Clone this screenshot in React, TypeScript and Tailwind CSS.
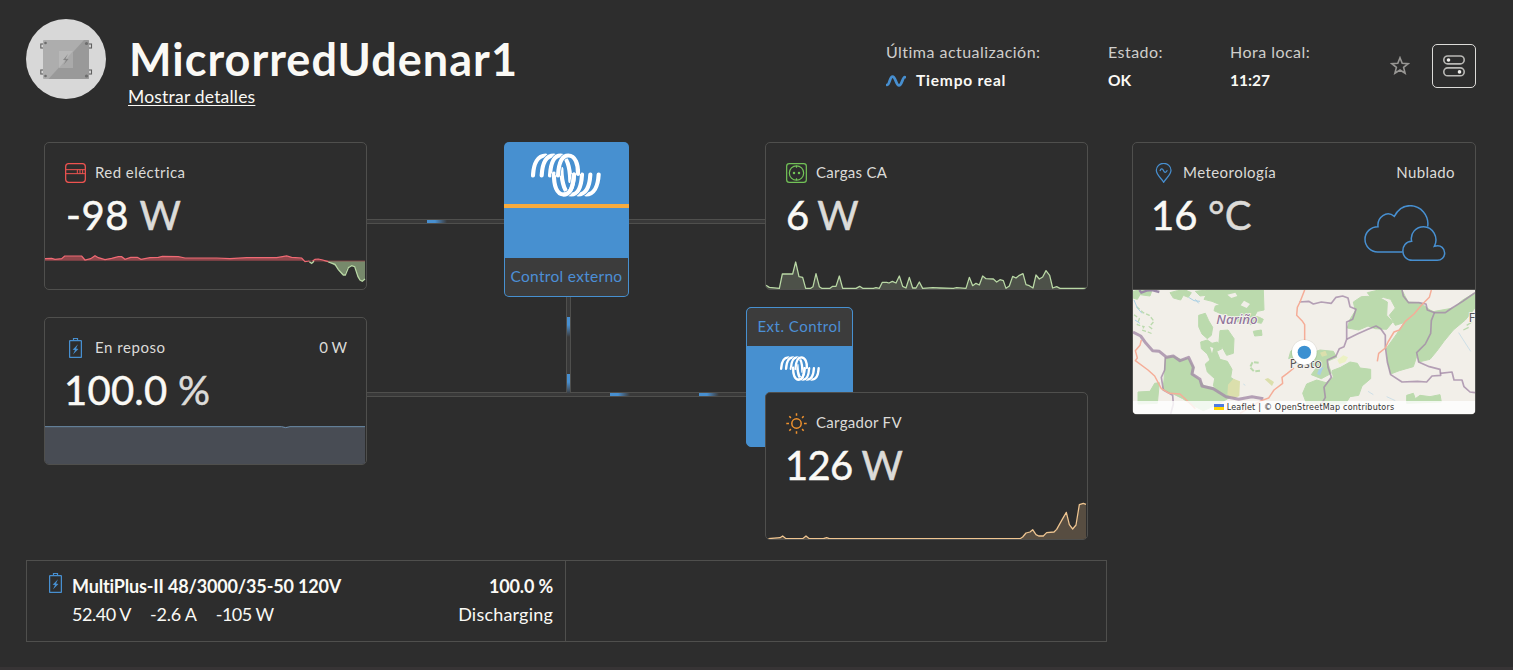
import type { ReactNode } from 'react';

const GREENS = [
  'M39 34 L58 30 L95 34 L90 48 L60 44 L52 58 L39 54Z',
  'M150 38 L172 32 L196 30 L214 38 L205 52 L190 46 L182 60 L160 54Z',
  'M226 34 L260 30 L430 30 L432 90 L412 94 L404 108 L418 112 L430 118 L424 130 L404 126 L392 134 L376 120 L352 126 L346 112 L318 104 L300 100 L282 92 L286 78 L300 74 L276 64 L252 58 L258 46 L240 48Z',
  'M236 106 L256 100 L266 122 L278 142 L274 166 L262 176 L246 162 L236 140Z',
  'M300 152 L324 150 L342 176 L340 220 L320 226 L308 204 L296 196Z',
  'M242 186 L262 180 L276 190 L292 186 L306 206 L290 214 L300 238 L322 244 L336 268 L332 292 L352 306 L350 340 L330 352 L302 334 L280 318 L284 296 L262 276 L256 252 L270 240 L262 222 L244 206Z',
  'M400 154 L424 150 L426 166 L404 168Z',
  'M136 232 L160 228 L186 240 L204 234 L222 262 L218 282 L240 300 L252 318 L296 326 L330 352 L296 372 L250 392 L218 376 L188 356 L152 338 L128 330 L132 300Z',
  'M54 336 L90 334 L104 310 L118 308 L112 370 L54 372Z',
  'M700 66 L724 50 L770 48 L802 66 L800 106 L818 126 L800 148 L766 146 L744 138 L716 150 L682 144 L690 118 L706 92Z',
  'M742 38 L776 30 L846 30 L864 66 L900 68 L930 90 L944 96 L938 130 L920 190 L890 230 L880 260 L838 272 L812 282 L804 250 L800 204 L830 162 L852 128 L826 136 L808 106 L826 84 L812 58 L790 52 L756 56Z',
  'M944 94 L1000 84 L1028 60 L1065 38 L1065 84 L1036 120 L1000 150 L972 184 L950 214 L930 238 L896 246 L894 214 L920 182 L936 140Z',
  'M548 340 L560 312 L590 300 L618 308 L640 292 L636 272 L662 262 L690 246 L712 250 L720 264 L752 268 L752 296 L726 318 L716 346 L690 350 L676 372 L560 372Z',
  'M566 222 L600 210 L640 214 L650 232 L622 244 L634 280 L604 296 L574 284 L590 262 L570 250Z',
  'M860 346 L880 340 L886 356 L900 346 L930 350 L960 344 L964 366 L860 370Z',
  'M512 214 L526 204 L524 232 L506 236Z',
];

const BORDERS = [
  'M39 156 L62 168 L78 190 L98 212 L118 214 L140 232 L160 228 L180 242 L206 232 L220 262 L216 282 L240 298 L246 318 L280 326 L318 350 L356 358 L396 350 L430 356',
];
const THIN_BORDERS = [
  'M538 66 L566 64 L580 72 L604 66 L634 70 L648 52 L668 48 L684 54 L690 80 L708 88 L698 118 L680 126 L680 178 L672 200 L658 206 L648 228 L622 240 L624 262 L634 292 L612 322 L616 352 L606 370',
  'M680 178 L712 162 L744 148 L768 138 L782 146 L796 166 L796 200 L802 246 L812 284 L846 306 L892 304 L920 306 L936 288 L962 286 L960 268 L928 260 L896 246 L890 218 L916 192 L932 160 L934 122 L944 96',
  'M846 30 L850 48 L866 68 L896 68 L918 72 L922 90 L944 98 L976 98 L996 84 L1028 64 L1065 38',
  'M960 280 L996 276 L1002 300 L1026 300 L1032 320 L1050 336 L1065 338',
  'M136 232 L134 270 L124 292 L130 330 L158 346 L160 372 L152 402',
];
const ROADS = [
  'M554 30 L540 66 L532 82 L530 106 L546 122 L554 134 L554 200',
  'M522 264 L502 280 L486 292 L488 310 L462 330 L446 354 L424 362 L406 372 L360 400',
  'M934 30 L928 52 L904 76 L882 102 L856 124 L838 150 L822 156 L804 186 L796 204 L776 220 L772 244',
  'M64 180 L60 196 L46 212 L52 234 L46 242 L84 270 L104 288 L124 326 L148 340 L180 342 L212 372 L226 386',
];

const COIL = [
  'M326 135C324 172 311 195 288 195',
  'M301 135C299 172 288 195 264 195',
  'M276 135C274 172 264 195 244 195C226 195 215 162 214 118',
  'M129 138C131 101 144 78 167 78',
  'M155 138C157 101 168 78 192 78',
  'M180 138C182 101 192 78 212 78C230 78 240 111 241 155',
  'M252 135C250 172 240 195 221 195C200 195 191 168 192 132',
  'M204 138C206 101 216 78 235 78C256 78 265 105 264 133',
];

function Logo({ className }: { className: string }) {
  return (
    <svg viewBox="123 71 210 131" fill="none" className={className}>
      {COIL.map((d) => (
        <g key={d}>
          <path d={d} stroke="#4790d0" strokeWidth="16" />
          <path d={d} stroke="#fff" strokeWidth="12.500" strokeLinecap="round" />
        </g>
      ))}
      <path d="M252 135C250 172 240 195 221 195" stroke="#fff" strokeWidth="12.500" strokeLinecap="round" />
    </svg>
  );
}

function BatteryIcon({ className }: { className: string }) {
  return (
    <svg width="13" height="20" viewBox="0 0 13 20" fill="none" stroke="#478fd0" className={className}>
      <path d="M4.500 2.500v-2h4v2" strokeWidth="1.200" />
      <rect x=".6" y="2.600" width="11.800" height="16.800" rx=".6" strokeWidth="1.300" />
      <path d="M9 6.300 3.600 11.800 6 12 4 16.400 9.400 10.900 7 10.600Z" fill="#478fd0" stroke="none" />
    </svg>
  );
}

const VALUE = 'whitespace-pre h-12 text-[40px] leading-[48px] [-webkit-text-stroke:0.5px_currentColor]';

function Card({ icon, label, labelClass = 'tracking-[0.3px]', right, value, valueClass, unit, chart }: {
  icon: ReactNode; label: string; labelClass?: string; right?: string; value: string; valueClass: string; unit: string; chart?: ReactNode;
}) {
  return (
    <div className="flex h-[148px] w-[323px] flex-col overflow-hidden rounded-[5px] border border-[#4f4f4d] bg-[#2d2d2d]">
      <div className="mt-5 flex h-5 items-center pl-5 pr-[19px] text-[15px] text-[#dcdbd8]">
        <span className="flex w-[31px] shrink-0">{icon}</span>
        <span className={`-ml-px pb-[2px] ${labelClass}`}>{label}</span>
        <span className="ml-auto pb-[2px]">{right}</span>
      </div>
      <div className={`mt-2 pl-5 text-[#faf9f5] ${VALUE} ${valueClass}`}>
        {value} <span className="text-[#dcdbd8]">{unit}</span>
      </div>
      <div className="mt-auto h-[45px]">{chart}</div>
    </div>
  );
}

function Stat({ title, children, className }: { title: string; children: ReactNode; className: string }) {
  return (
    <div className={`flex flex-col ${className}`}>
      <div className="h-7 text-base leading-[26px] tracking-[0.47px] text-[#cfcecb]">{title}</div>
      <div className="flex h-7 items-center text-[15.500px] font-bold text-[#faf9f5]">{children}</div>
    </div>
  );
}

function Header() {
  return (
    <header className="flex h-[142px] shrink-0">
      <svg width="80" height="80" viewBox="26 19 80 80" className="ml-[26px] mt-[19px] shrink-0">
        <circle cx="66" cy="59" r="40" fill="#d8d8d8" />
        <g fill="none" stroke="#606060" strokeWidth="1.100">
          <rect x="40.800" y="44" width="3" height="4" />
          <rect x="40.800" y="70" width="3" height="4" />
          <rect x="88.500" y="44" width="3" height="4" />
          <rect x="88.500" y="70" width="3" height="4" />
        </g>
        <rect x="43" y="40" width="46" height="39" rx="1" fill="#adadad" />
        <path d="M84 40h4a1 1 0 0 1 1 1v37a1 1 0 0 1-1 1H48.500Z" fill="#999" />
        <rect x="59" y="51" width="14" height="17" fill="#b8b8b8" />
        <path d="M73 51v17H59Z" fill="#aaa" />
        <path d="M68 54l-5 6 3 .3-2.500 4.700 5-6-3-.3Z" fill="#858585" />
        <g fill="#6d6d6d">
          <circle cx="45.500" cy="43" r="1.300" />
          <circle cx="45.500" cy="76" r="1.300" />
          <circle cx="86.500" cy="43.500" r="1.600" />
          <circle cx="86.500" cy="76" r="1.600" />
        </g>
      </svg>
      <div className="ml-[23px] flex w-[757px] flex-col">
        <h1 className="mt-[32px] h-[54px] text-[45px] font-bold leading-[54px] tracking-[1.020px] text-[#faf9f5]">MicrorredUdenar1</h1>
        <a className="-ml-px h-[22px] w-fit text-[17.500px] leading-[22px] tracking-[0.2px] text-[#faf9f5] underline decoration-1 underline-offset-2">Mostrar detalles</a>
      </div>
      <div className="flex pt-[39px]">
        <Stat title="Última actualización:" className="w-[222px]">
          <svg width="20" height="12" viewBox="0 0 20 12" fill="none" stroke="#478fd0" strokeWidth="2.800" strokeLinecap="round" className="mr-[10px]">
            <path d="M1.200 9.800C3.800 9.800 3.600 1.600 6.600 1.600S10 10.400 13 10.400 16.400 2.200 18.800 2.200" />
          </svg>
          <span className="tracking-[0.8px]">Tiempo real</span>
        </Stat>
        <Stat title="Estado:" className="w-[122px]">OK</Stat>
        <Stat title="Hora local:" className="w-[161px]">11:27</Stat>
      </div>
      <svg width="20" height="19" viewBox="0 0 20 19" fill="none" stroke="#979693" strokeWidth="1.600" className="-ml-px mt-14 shrink-0">
        <path d="M10 1.700 12.200 7.200 18.200 7.600 13.600 11.400 15.100 17.200 10 14 4.900 17.200 6.400 11.400 1.800 7.600 7.800 7.200Z" />
      </svg>
      <button className="ml-[22px] mt-11 flex h-11 w-11 items-center justify-center rounded-[5px] border border-[#dcdbd8]">
        <svg width="22" height="22" viewBox="0 0 22 22" fill="none" stroke="#b9b8b5" strokeWidth="1.600">
          <rect x=".8" y="1" width="20.400" height="7.900" rx="3.900" />
          <rect x=".8" y="12.900" width="20.400" height="7.900" rx="3.900" />
          <circle cx="5.500" cy="5" r="1.800" fill="#f0efec" stroke="none" />
          <circle cx="16.500" cy="16.900" r="1.800" fill="#f0efec" stroke="none" />
        </svg>
      </button>
    </header>
  );
}

const gridChart = (
  <svg width="321" height="45" viewBox="45 342 963 135" className="block">
    <path d="M45 386L65 385 75 388 95 386 104 378H155L165 390 182 386 195 377 205 383 225 389 245 385 265 380H275L285 388 302 382H322L333 388 360 383 385 382 397 379 445 380 465 384H560L600 386 650 383 740 383 770 378 785 382 815 384 824 393 835 392H45Z" fill="#8f464b" />
    <path d="M845 392L865 387 895 392Z" fill="#8f464b" />
    <path d="M880 393H1005V448L995 454 984 442 974 410 962 407 952 414 944 435 935 433 918 409 900 398Z" fill="#77896b" />
    <path d="M835 393H1005" stroke="#8f464b" strokeWidth="2.500" />
    <path d="M45 386L65 385 75 388 95 386 104 378H155L165 390 182 386 195 377 205 383 225 389 245 385 265 380H275L285 388 302 382H322L333 388 360 383 385 382 397 379 445 380 465 384H560L600 386 650 383 740 383 770 378 785 382 815 384 825 395 838 393M848 393L855 388 865 387 878 390 895 395" fill="none" stroke="#f06a74" strokeWidth="3.700" />
    <path d="M838 395L845 400 852 394M895 396L915 403 925 419 940 435H946L955 413 965 407 974 410 984 440 990 450 997 454 1005 447" fill="none" stroke="#b9d8a5" strokeWidth="3.800" />
  </svg>
);

const loadLine =
  'M48 466L58 472 88 475 97 432H128L137 396 147 440 158 442 167 475H182L189 470 198 431 208 470 215 475H240L248 469H258L268 438 278 475H318L329 469 338 475H370L378 473 388 475 397 457 410 457 417 459 427 454 438 459 448 438 458 469 468 474 478 442 488 474H498L508 456 518 475 548 473 570 474 610 475 620 473 648 475 658 442 668 467 678 460 688 465 698 438 708 446 730 447 740 456 750 449 760 452 768 475 778 468 788 439 798 444 808 436 819 431 828 464 838 467 849 474 858 435 868 447 878 441 888 422 899 436 908 474 920 470 930 475H1011';
const loadChart = (
  <svg width="321" height="45" viewBox="48 342 963 135" className="block">
    <path d={`${loadLine}V477H48Z`} fill="#4d5149" />
    <path d={loadLine} fill="none" stroke="#b9d8a5" strokeWidth="3.800" strokeLinejoin="round" />
  </svg>
);

const batteryChart = (
  <svg width="321" height="45" viewBox="45 342 963 135" className="block">
    <path d="M45 365H1005V477H45Z" fill="#484c54" />
    <path d="M45 365H755L767 368 780 365H1005" fill="none" stroke="#6b8caa" strokeWidth="3" />
  </svg>
);

const pvLine =
  'M55 461L90 458 98 453 108 461H158L168 453 178 461H220L230 458 238 461H810L818 456 828 444 840 441 848 434 858 449 866 453H880L890 443 912 441 920 433 938 401 949 382 958 419 968 432 978 420 988 359 1000 355 1008 358';
const pvChart = (
  <svg width="321" height="45" viewBox="48 327 963 135" className="block">
    <path d={`${pvLine}V462H55Z`} fill="#574d41" />
    <path d={pvLine} fill="none" stroke="#efc591" strokeWidth="3.800" strokeLinejoin="round" />
  </svg>
);

function Diagram() {
  return (
    <div className="relative ml-11 flex h-[418px] w-[1044px] shrink-0">
      <div className="absolute left-[323px] top-[77px] h-[5px] w-[398px] border-y border-[#4f4f4d] bg-[#393939]" />
      <div className="absolute left-[383px] top-[78px] h-[3px] w-5 bg-linear-to-r from-[#478fd0] from-40% to-[#393939]" />
      <div className="absolute left-[522px] top-[155px] h-[95px] w-[5px] border-x border-[#4f4f4d] bg-[#393939]" />
      <div className="absolute left-[323px] top-[250px] h-[5px] w-[380px] border-y border-[#4f4f4d] bg-[#393939]" />
      <div className="absolute left-[523px] top-[175px] h-5 w-[3px] bg-linear-to-b from-[#478fd0] from-40% to-[#393939]" />
      <div className="absolute left-[523px] top-[232px] h-5 w-[3px] bg-linear-to-b from-[#478fd0] from-40% to-[#393939]" />
      <div className="absolute left-[566px] top-[251px] h-[3px] w-5 bg-linear-to-r from-[#478fd0] from-40% to-[#393939]" />
      <div className="absolute left-[655px] top-[251px] h-[3px] w-5 bg-linear-to-r from-[#478fd0] from-40% to-[#393939]" />

      <div className="flex w-[323px] flex-col gap-[27px]">
        <Card
          label="Red eléctrica"
          labelClass="tracking-[0.450px]"
          value="-98"
          valueClass="ml-px tracking-[0.6px]"
          unit="W"
          chart={gridChart}
          icon={
            <svg width="21" height="20" viewBox="105 99 63 60" fill="none" stroke="#ef5350" strokeWidth="3.800">
              <rect x="107" y="101" width="59" height="56" rx="9" />
              <path d="M107 119H166M107 131H166M142 119V131M150 119V131M158 119V131" strokeWidth="3" />
            </svg>
          }
        />
        <Card
          label="En reposo"
          labelClass="tracking-[0.550px]"
          right="0 W"
          value="100.0"
          valueClass="-ml-px tracking-[0.250px]"
          unit="%"
          chart={batteryChart}
          icon={<BatteryIcon className="ml-1" />}
        />
      </div>

      <div className="relative ml-[137px] flex h-[155px] w-[125px] flex-col overflow-hidden rounded-[5px] bg-[#4790d0]">
        <div className="flex h-[62px] justify-center pt-[11px] pr-[2px]">
          <Logo className="h-[44px] w-[70px]" />
        </div>
        <div className="h-1 bg-[#f7ab3e]" />
        <div className="h-[50px]" />
        <div className="mx-px mb-px flex flex-1 items-center justify-center whitespace-nowrap rounded-b-[4px] bg-[#3c3c3c] text-[15.500px] tracking-[0.3px] text-[#4c8fd6]">Control externo</div>
      </div>

      <div className="relative ml-[117px] flex w-[342px] flex-col">
        <div className="ml-[19px]">
          <Card
            label="Cargas CA"
            value="6"
            valueClass="tracking-[-0.8px]"
            unit="W"
            chart={loadChart}
            icon={
              <svg width="21" height="20" viewBox="108 99 63 60" fill="none" stroke="#72c257" strokeWidth="3.700">
                <rect x="110" y="101" width="59" height="56" rx="8" />
                <circle cx="139.500" cy="129" r="21.500" />
                <path d="M139.500 107v6M139.500 145v6" />
                <circle cx="132" cy="129" r="3.800" fill="#72c257" stroke="none" />
                <circle cx="147" cy="129" r="3.800" fill="#72c257" stroke="none" />
              </svg>
            }
          />
        </div>
        <div className="mt-[17px] flex h-[140px] w-[107px] flex-col overflow-hidden rounded-[5px] border border-[#4790d0] bg-[#4790d0]">
          <div className="flex h-[38px] items-center justify-center whitespace-nowrap rounded-t-[4px] bg-[#3c3c3c] pb-[2px] text-[15px] tracking-[0.5px] text-[#4c8fd6]">Ext. Control</div>
          <div className="flex justify-center pt-[10px]">
            <Logo className="h-[25px] w-10" />
          </div>
        </div>
        <div className="-mt-[55px] ml-[19px]">
          <Card
            label="Cargador FV"
            value="126"
            valueClass="-ml-px tracking-[-0.7px]"
            unit="W"
            chart={pvChart}
            icon={
              <svg width="21" height="21" viewBox="0 0 21 21" fill="none" stroke="#f0922e" strokeWidth="1.500">
                <circle cx="10.500" cy="10.500" r="4.700" />
                <path d="M10.500 .3v2.500M10.500 18.200v2.500M.3 10.500h2.700M18 10.500h2.700M3.300 3.300l1.600 1.600M16.100 16.100l1.600 1.600M3.300 17.700l1.600-1.600M16.100 4.900l1.600-1.600" />
              </svg>
            }
          />
        </div>
      </div>
    </div>
  );
}

function WeatherMap() {
  return (
    <div className="relative h-[124px] overflow-hidden rounded-b-[4px] bg-[#f2efe9]">
      <svg width="342" height="124" viewBox="39 30 1026 372" className="block">
        <rect x="39" y="30" width="1026" height="372" fill="#f2efe9" />
        <g fill="#bbdaad" stroke="#bbdaad" strokeWidth="3" strokeLinejoin="round">
          {GREENS.map((d) => <path key={d} d={d} />)}
        </g>
        <g fill="none" stroke="#bbdaad" strokeWidth="4">
          <path d="M42 104L58 116 52 134 72 140 66 150 84 156 98 162M50 80L70 98 88 106 102 124 88 140 100 150" strokeDasharray="12 6" />
          <path d="M416 248L398 246 390 262 402 274 422 272" strokeDasharray="14 5" strokeWidth="6" />
          <path d="M1040 136L1056 126M1030 150L1046 142" />
        </g>
        <g fill="#f2efe9">
          <path d="M322 44L346 38 352 48 334 54ZM296 118L312 112 326 130 312 138ZM372 62L390 72 380 84 362 76ZM270 200L280 204 276 220Z" />
          <path d="M760 200L780 190 772 220Z" />
        </g>
        <g fill="#dbdfac">
          <path d="M324 314L340 296 360 304 358 348 340 356 322 344ZM434 298L444 294 462 306 456 318ZM600 218L616 212 622 226 606 230Z" />
          <path d="M652 240L670 226 684 232 676 246 658 252Z" fill="#ecf2c4" />
        </g>
        <g fill="none" stroke="#a9cfe4" strokeWidth="3">
          <path d="M206 52L222 62 240 64M226 58L236 70M42 60L52 84 66 100M45 120L60 130M610 262L596 282" strokeWidth="3" />
          <path d="M604 262L596 284" strokeWidth="10" />
          <path d="M1016 158L1030 180 1052 214M370 312L376 316M744 334L760 344M800 350L826 362" strokeWidth="1.500" />
        </g>
        <path d="M58 30L64 38 80 32 96 30 118 36" fill="none" stroke="#9c8aa8" strokeWidth="7" />
        <g fill="none" stroke="#a48ba8" strokeOpacity=".8" strokeLinejoin="round">
          {BORDERS.map((d) => <path key={d} d={d} strokeWidth="9" />)}
          {THIN_BORDERS.map((d) => <path key={d} d={d} strokeWidth="5" />)}
        </g>
        <g fill="none" stroke="#f5ad98" strokeWidth="4.500" strokeLinejoin="round">
          {ROADS.map((d) => <path key={d} d={d} />)}
        </g>
        <g className="font-['Noto_Sans',sans-serif]" stroke="#f7f4f0" strokeWidth="5" paintOrder="stroke">
          <text x="289" y="132" fontSize="40" fontStyle="italic" fontWeight="500" fill="#91759b" textLength="124">Nariño</text>
          <text x="509" y="264" fontSize="36" fill="#555" textLength="96">Pasto</text>
          <text x="1046" y="126" fontSize="36" fill="#555">F</text>
        </g>
        <circle cx="553" cy="218" r="40" fill="#000" opacity=".06" />
        <circle cx="553" cy="217" r="37" fill="#fff" />
        <circle cx="553" cy="217" r="20" fill="#3b90d1" />
      </svg>
      <div className="absolute inset-x-0 bottom-0 flex h-[13px] items-center justify-center bg-white/80 pt-px font-['DejaVu_Sans',sans-serif] text-[8px] leading-[12px] text-[#333]">
        <svg width="10" height="6" className="-mt-[2px] mr-[3px]">
          <path d="M0 0h10v3H0z" fill="#4C7BE1" />
          <path d="M0 3h10v3H0z" fill="#FFD500" />
        </svg>
        <span className="whitespace-nowrap tracking-[0.220px]">Leaflet | © OpenStreetMap contributors</span>
      </div>
    </div>
  );
}

function Weather() {
  return (
    <div className="ml-11 flex h-[273px] w-[344px] flex-col rounded-[5px] border border-[#4f4f4d]">
      <div className="flex h-[147px] justify-between border-b border-[#4f4f4d] px-5 pt-5">
        <div>
          <div className="flex h-5 items-center text-[15px] text-[#dcdbd8]">
            <svg width="17" height="20" viewBox="103 99 51 60" fill="none" stroke="#478fd0" strokeWidth="3.700" className="ml-[2px] mr-[11px]">
              <path d="M129 157C124 146 107 136 107 121A22 21 0 0 1 151 121C151 136 134 146 129 157Z" />
              <path d="M118 123C120 116 125 114 128 121S135 131 140 121" />
            </svg>
            <span className="pb-[2px] tracking-[0.450px]">Meteorología</span>
          </div>
          <div className={`-ml-[2px] mt-2 tracking-[0.1px] text-[#faf9f5] ${VALUE}`}>16 <span className="text-[#dcdbd8]">°C</span></div>
        </div>
        <div className="flex flex-col items-end">
          <div className="h-5 text-[15px] leading-[18px] tracking-[0.4px] text-[#dcdbd8]">Nublado</div>
          <svg width="82" height="57" viewBox="732 225 246 171" fill="none" stroke="#478fd0" strokeWidth="4.500" className="mr-[9px] mt-[22px]">
            <path d="M848 366H773C752 366 735 349 735 328S752 290 774 290C771 262 800 240 823 259C834 238 851 227 870 227C902 227 928 256 923 290" />
            <path d="M877 391C840 391 839 336 875 334C869 309 889 290 911 290C938 290 957 322 943 349C964 343 974 356 974 369C974 381 964 391 952 391Z" />
          </svg>
        </div>
      </div>
      <WeatherMap />
    </div>
  );
}

export default function App() {
  return (
    <main className="flex h-[670px] w-[1513px] flex-col overflow-hidden bg-[#2d2d2d] font-['Lato','Open_Sans',sans-serif]">
      <Header />
      <section className="flex h-[418px] shrink-0">
        <Diagram />
        <Weather />
      </section>
      <section className="ml-[26px] flex h-[82px] w-[1081px] shrink-0 border border-[#4f4f4d] text-[18px] text-[#faf9f5]">
        <div className="flex w-[539px] border-r border-[#4f4f4d] pl-[22px] pr-[12px] pt-[11px]">
          <BatteryIcon className="mr-[10px] mt-px shrink-0" />
          <div className="flex flex-1 flex-col">
            <div className="flex h-7 items-center justify-between font-bold tracking-[-0.160px]">
              <span>MultiPlus-II 48/3000/35-50 120V</span>
              <span>100.0 %</span>
            </div>
            <div className="flex h-7 items-center">
              <span className="mr-[19px] tracking-[-0.450px]">52.40 V</span>
              <span className="mr-[19px] tracking-[-0.2px]">-2.6 A</span>
              <span className="tracking-[-0.550px]">-105 W</span>
              <span className="ml-auto tracking-[0.2px]">Discharging</span>
            </div>
          </div>
        </div>
      </section>
      <footer className="mt-auto h-[3px] bg-[#373435]" />
    </main>
  );
}
